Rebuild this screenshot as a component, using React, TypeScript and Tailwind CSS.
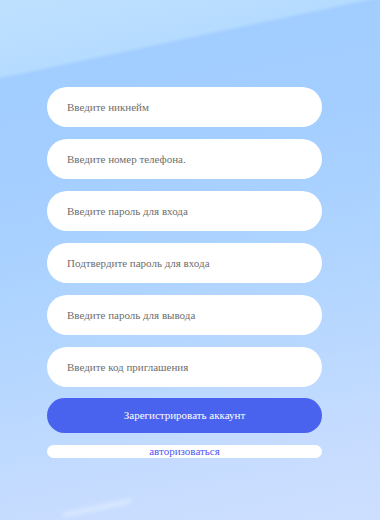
import React from 'react';

const fields = [
  'Введите никнейм',
  'Введите номер телефона.',
  'Введите пароль для входа',
  'Подтвердите пароль для входа',
  'Введите пароль для вывода',
  'Введите код приглашения',
];

export default function App() {
  return (
    <div className="relative min-h-[520px] w-full overflow-hidden bg-[linear-gradient(168deg,#bfe1ff_0%,#b5dbff_12.6%,#a2cdff_13.4%,#a3ceff_30%,#b3d6ff_60%,#c6dcff_85%,#cddfff_100%)] [font-family:'Liberation_Serif',serif]">
      <div className="flex flex-col pl-[47px] pr-[58px] pt-[87px]">
        <div className="flex flex-col gap-3">
          {fields.map((f) => (
            <input
              key={f}
              placeholder={f}
              className="h-10 w-full rounded-full bg-white px-5 text-[11px] text-[#333] outline-none placeholder:text-[#6e6e6e] [font-family:'Liberation_Serif',serif]"
            />
          ))}
        </div>
        <button className="mt-[11px] h-[35px] w-full rounded-full bg-[#4a63ee] text-[11px] text-white [font-family:'Liberation_Serif',serif]">
          Зарегистрировать аккаунт
        </button>
        <button className="mt-3 h-[13px] w-full rounded-full bg-white text-[11px] leading-[13px] text-[#4f56f2] [font-family:'Liberation_Serif',serif]">
          авторизоваться
        </button>
      </div>
      <div className="pointer-events-none absolute left-[62px] top-[506px] h-[4px] w-[70px] -rotate-12 rounded-full bg-white/40 blur-[2px]" />
    </div>
  );
}
